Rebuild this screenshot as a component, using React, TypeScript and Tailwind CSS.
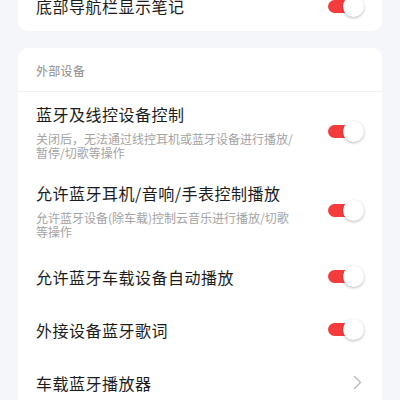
import React from "react";

type Item = {
  title: string;
  desc?: string;
  kind: "toggle" | "link";
};

const items: Item[] = [
  {
    title: "蓝牙及线控设备控制",
    desc: "关闭后，无法通过线控耳机或蓝牙设备进行播放/暂停/切歌等操作",
    kind: "toggle",
  },
  {
    title: "允许蓝牙耳机/音响/手表控制播放",
    desc: "允许蓝牙设备(除车载)控制云音乐进行播放/切歌等操作",
    kind: "toggle",
  },
  { title: "允许蓝牙车载设备自动播放", kind: "toggle" },
  { title: "外接设备蓝牙歌词", kind: "toggle" },
  { title: "车载蓝牙播放器", kind: "link" },
];

function Toggle() {
  return (
    <div className="relative h-[21px] w-[36px] shrink-0">
      <div className="absolute left-0 top-[4px] h-[13px] w-[29px] rounded-full bg-[#f43c3c]" />
      <div className="absolute right-0 top-0 h-[21px] w-[21px] rounded-full bg-white shadow-[0_1px_3px_rgba(0,0,0,0.28)]" />
    </div>
  );
}

function Chevron() {
  return (
    <div className="flex w-[36px] shrink-0 justify-end pr-[2px]">
      <svg width="9" height="15" viewBox="0 0 9 15" fill="none" aria-hidden>
        <path d="M1.5 1.5 L7.5 7.5 L1.5 13.5" stroke="#b8b8b8" strokeWidth="1.4" strokeLinecap="round" strokeLinejoin="round" />
      </svg>
    </div>
  );
}

function Row({ item }: { item: Item }) {
  return (
    <div
      className={
        item.desc
          ? "flex items-center gap-8 px-[18px] py-[11px]"
          : "flex h-[53px] items-center gap-8 px-[18px]"
      }
    >
      <div className="min-w-0 flex-1">
        <p className="text-[16px] leading-[22px] tracking-[0.5px] text-[#1c1c1c]">{item.title}</p>
        {item.desc && (
          <p className="mt-[7px] text-[12px] leading-[14px] text-[#a3a3a3]">{item.desc}</p>
        )}
      </div>
      {item.kind === "toggle" ? <Toggle /> : <Chevron />}
    </div>
  );
}

export default function App() {
  return (
    <div
      className="h-[400px] w-[400px] overflow-hidden bg-[#f4f6f9] px-[18px]"
      style={{ fontFamily: '"Noto Sans CJK SC", "Noto Sans", sans-serif' }}
    >
      <div className="-mt-[19px] rounded-[10px] bg-white">
        <div className="flex h-[50px] items-center gap-8 px-[18px]">
          <p className="flex-1 text-[16px] leading-[22px] tracking-[0.5px] text-[#1c1c1c]">底部导航栏显示笔记</p>
          <Toggle />
        </div>
      </div>

      <div className="mt-[17px] rounded-[10px] bg-white pb-4">
        <div className="flex h-[44px] items-center border-b border-[#f0f0f0] px-[18px] pt-[3px]">
          <p className="text-[12px] tracking-[0.3px] text-[#8c8c8c]">外部设备</p>
        </div>
        {items.map((item) => (
          <Row key={item.title} item={item} />
        ))}
      </div>
    </div>
  );
}
